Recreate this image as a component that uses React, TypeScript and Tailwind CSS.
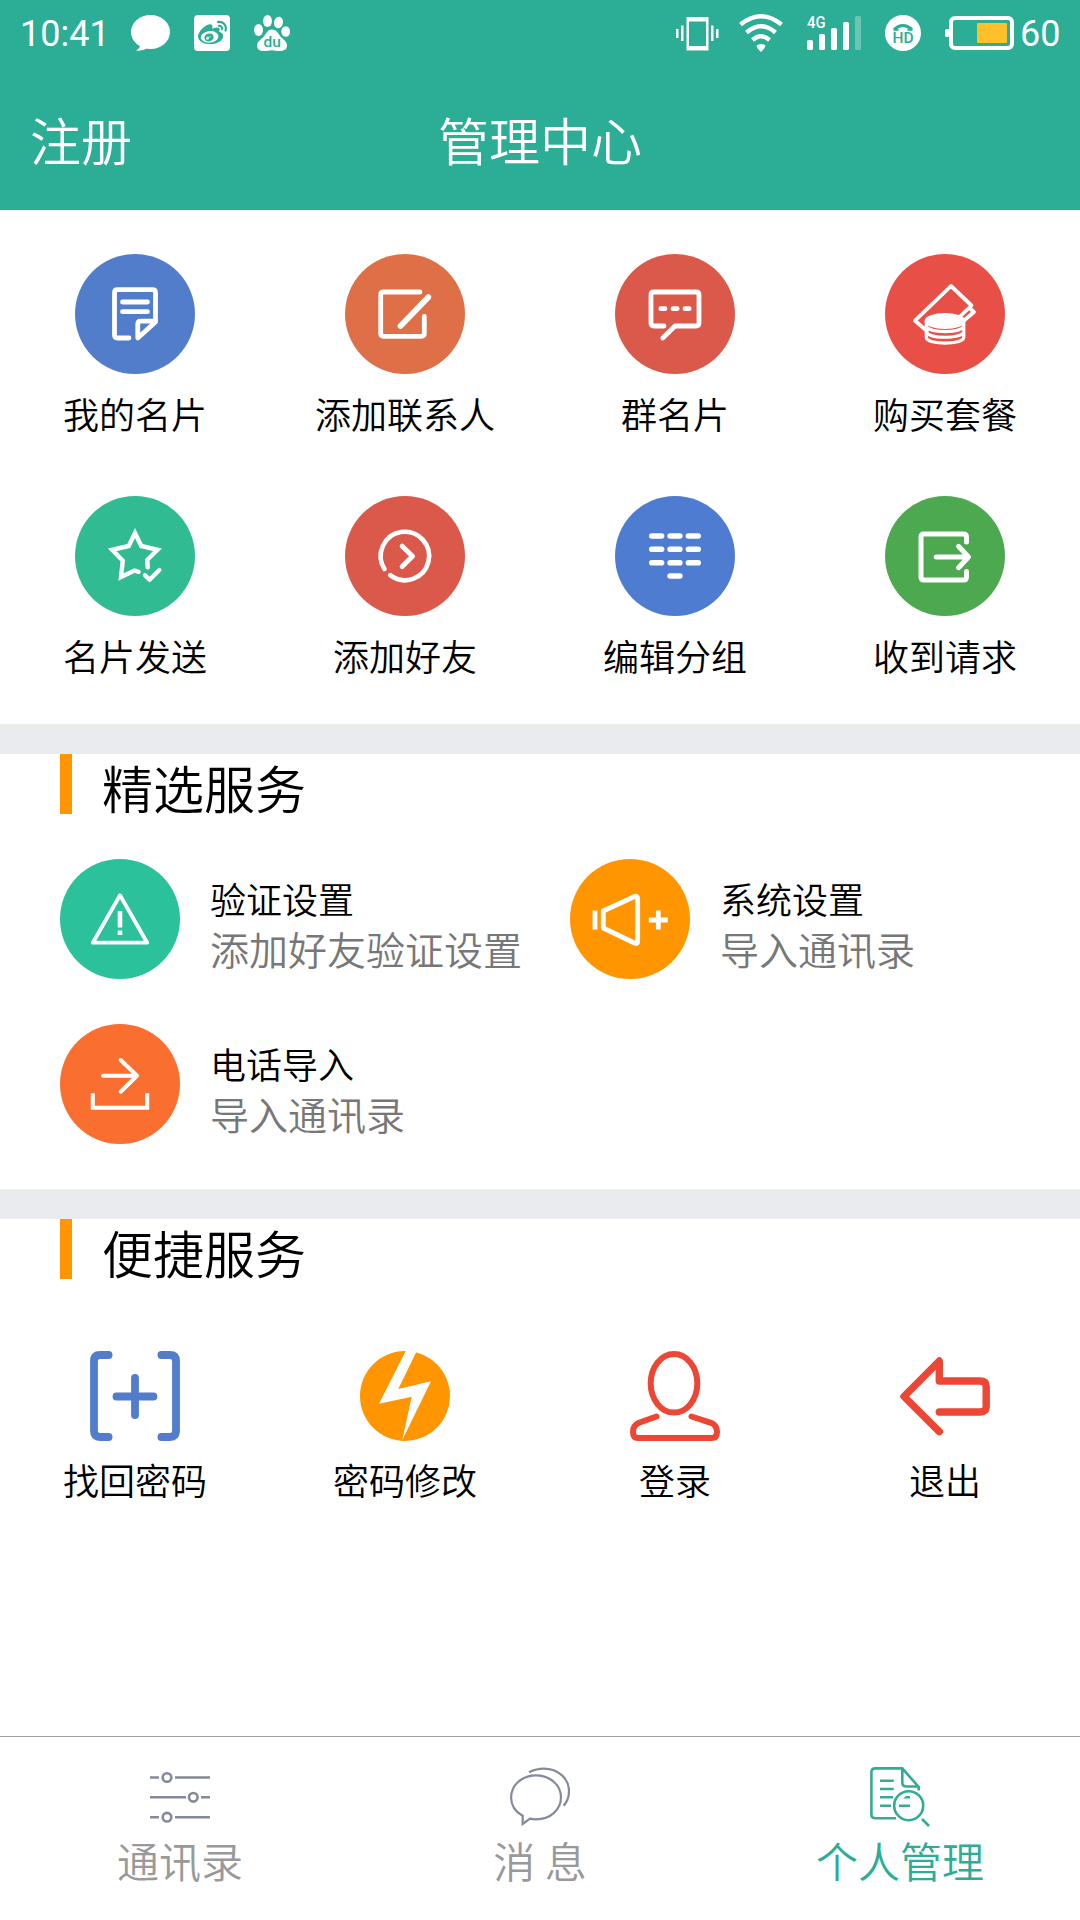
import type { ReactNode } from "react";
import { FaWeibo } from "react-icons/fa";

interface MenuItem {
  label: string;
  bg?: string;
  icon: ReactNode;
}

interface ServiceItem {
  title: string;
  desc: string;
  bg: string;
  icon: ReactNode;
}

const menuItems: MenuItem[] = [
  {
    label: "我的名片",
    bg: "bg-[#517dcb]",
    icon: (
      <g strokeWidth="4.8">
        <path d="M54 84H42.5Q39.5 84 39.5 81V38.7Q39.5 35.7 42.5 35.7H77.5Q80.5 35.7 80.5 38.7V68L62.8 84V70Q62.8 67.2 65.5 67.2H79" />
        <path d="M47.5 48H72.5M47.5 57.7H72.5" />
      </g>
    ),
  },
  {
    label: "添加联系人",
    bg: "bg-[#de6f46]",
    icon: (
      <>
        <path strokeWidth="4.8" d="M75 38H38.7Q35.7 38 35.7 41V79.3Q35.7 82.3 38.7 82.3H76.3Q79.3 82.3 79.3 79.3V62.5" />
        <path strokeWidth="5.8" d="M55.5 72L83.3 43.2" />
      </>
    ),
  },
  {
    label: "群名片",
    bg: "bg-[#da594a]",
    icon: (
      <>
        <path strokeWidth="4.8" d="M49 72H39Q36 72 36 69V41Q36 38 39 38H81Q84 38 84 41V69Q84 72 81 72H60L47.8 84" />
        <path strokeWidth="4.8" d="M45.8 54.7H50M58 54.7H62.2M70 54.7H74.2" />
      </>
    ),
  },
  {
    label: "购买套餐",
    bg: "bg-[#e84f46]",
    icon: (
      <g strokeWidth="3.8">
        <path d="M42 77L30 66.7L66 32L86.5 51.5L75 62.5M84.5 54L89 58L79 66.5" />
        <ellipse cx="60" cy="67" rx="18.5" ry="6" fill="#fff" />
        <path strokeWidth="3.2" d="M41.3 67V83.5C42 91 78 91 78.8 83.5V67M41.3 72C44 79.5 76 79.5 78.8 72M41.3 78C44 85 76 85 78.8 78" />
      </g>
    ),
  },
  {
    label: "名片发送",
    bg: "bg-[#31bb93]",
    icon: (
      <g strokeWidth="4.4">
        <path strokeLinejoin="miter" d="M72.7 71.3L72.3 63.8L82.5 53.8L66.3 50L60 37L53.7 50L37.2 53.8L47.8 64.8L46 81L59.5 74.5L63.6 75.8" />
        <path d="M70 79.3L74.6 83.8L84.3 74" />
      </g>
    ),
  },
  {
    label: "添加好友",
    bg: "bg-[#da594a]",
    icon: (
      <g strokeWidth="4.6">
        <path d="M39.5 73A24.2 24.2 0 1 1 45.2 79.2" />
        <path strokeWidth="5" d="M57.2 50.2L67.5 60.3L57.2 70.5" />
      </g>
    ),
  },
  {
    label: "编辑分组",
    bg: "bg-[#4e7cd1]",
    icon: (
      <path
        strokeWidth="5.6"
        d="M36.8 40H46.6M55.1 40H64.9M73.4 40H83.2M36.8 53.3H46.6M55.1 53.3H64.9M73.4 53.3H83.2M36.8 66.7H46.6M55.1 66.7H64.9M73.4 66.7H83.2M55.1 80H64.9"
      />
    ),
  },
  {
    label: "收到请求",
    bg: "bg-[#4da94f]",
    icon: (
      <g strokeWidth="5">
        <path d="M81.5 46V41Q81.5 38 78.5 38H39Q36 38 36 41V81Q36 84 39 84H78.5Q81.5 84 81.5 81V75.5" />
        <path d="M51.2 61H83M73.5 50.3L83.5 61L73.5 71.7" />
      </g>
    ),
  },
];

const serviceItems: ServiceItem[] = [
  {
    title: "验证设置",
    desc: "添加好友验证设置",
    bg: "bg-[#2bc29b]",
    icon: (
      <>
        <path strokeWidth="3.8" d="M60 36.3L87.2 83.7H32.8Z" />
        <path strokeWidth="4.6" strokeLinecap="butt" d="M60 52V68.5M60 71.5V76" />
      </>
    ),
  },
  {
    title: "系统设置",
    desc: "导入通讯录",
    bg: "bg-[#ff9500]",
    icon: (
      <g strokeWidth="4.8" strokeLinecap="butt">
        <path d="M25 51.5V70.5M88.3 51.5V70.5M78.8 61H97.8" />
        <path d="M33.3 52L64.5 37.5Q67.7 36.5 67.7 40V82Q67.7 85.5 64.5 84L33.3 69Z" />
      </g>
    ),
  },
  {
    title: "电话导入",
    desc: "导入通讯录",
    bg: "bg-[#fa6e2f]",
    icon: (
      <g strokeWidth="4">
        <path d="M43 51.7H77M60.7 36L77 51.7L60.7 67.7" />
        <path strokeLinecap="butt" strokeLinejoin="miter" d="M32.8 69.3V83.7H87.2V69.3" />
      </g>
    ),
  },
];

const quickItems: MenuItem[] = [
  {
    label: "找回密码",
    icon: (
      <g stroke="#517dcb" strokeWidth="7.8">
        <path d="M18.6 4H10Q4 4 4 10V80Q4 86 10 86H18.6M71.4 4H80Q86 4 86 10V80Q86 86 80 86H71.4" />
        <path d="M45 27V64M26.5 45.5H63.5" />
      </g>
    ),
  },
  {
    label: "密码修改",
    icon: (
      <>
        <circle cx="45" cy="45" r="45" fill="#ff9500" />
        <path fill="#fff" d="M45.7 0L19 52.7L51.7 45.7L42.3 89L71 30.3L38.3 38L56 1.5V0Z" />
      </>
    ),
  },
  {
    label: "登录",
    icon: (
      <g stroke="#ed4634" strokeWidth="6">
        <ellipse cx="44" cy="32.3" rx="23.3" ry="29.3" />
        <path d="M26.5 65.5L9 71.8Q3 74.5 3 81Q3 87 8 87H82Q87 87 87 81Q87 74.5 81 71.8L61.5 65.5" />
      </g>
    ),
  },
  {
    label: "退出",
    icon: (
      <path
        stroke="#ed4634"
        strokeWidth="7.4"
        d="M39.3 80.7L4 45.5L39.3 10V30H80Q86.2 30 86.2 35.5V55.5Q86.2 61 80 61H39.3"
      />
    ),
  },
];

const StatusBar = () => (
  <div className="flex h-[66px] items-center pl-5 font-['Roboto'] text-4xl font-normal text-white">
    <span className="w-[111px] pt-0.5">10:41</span>
    <svg width="39" height="36" viewBox="0 0 39 36" fill="#fff">
      <ellipse cx="19.5" cy="17" rx="19.5" ry="17" />
      <path d="M9 29Q10 33 5 35.5Q14 36.5 18 31Z" />
    </svg>
    <div className="ml-6 flex size-9 items-center justify-center rounded-sm bg-white">
      <FaWeibo className="size-[29px] text-[#2cad95]" />
    </div>
    <svg className="ml-6" width="36" height="36" viewBox="0 0 36 36" fill="#fff">
      <ellipse cx="4.5" cy="15" rx="4.5" ry="6" />
      <ellipse cx="13.5" cy="6" rx="4.5" ry="6" />
      <ellipse cx="24.5" cy="7.5" rx="4.5" ry="5.8" transform="rotate(12 24.5 7.5)" />
      <ellipse cx="31.7" cy="16.5" rx="4.4" ry="5.2" />
      <path d="M18 14.5C23 14.5 24 19 27.5 22.5C31 26 33.5 27.5 33 31.5C32.5 35 29 36 25.5 36C22 36 21 35.2 18 35.2C15 35.2 13 36 9.5 36C6 36 3 34.5 3 31C3 27 5.5 25.5 9 22.5C12 19.5 13 14.5 18 14.5Z" />
      <text x="18.3" y="31.5" textAnchor="middle" fontSize="15.5" fontWeight="500" fill="#2cad95">du</text>
    </svg>

    <svg className="ml-auto" width="43" height="36" viewBox="0 0 43 36" fill="#fff">
      <path fillRule="evenodd" d="M10.5 2H32.5V35.5H10.5ZM13 6.5V31H30V6.5Z" />
      <path d="M5 10.5H7.5V26H5ZM0 14H2.5V23H0ZM35 10.5H37.5V26H35ZM40 14H42.5V23H40Z" />
    </svg>
    <svg className="ml-5" width="44" height="38" viewBox="0 0 44 38" fill="none" stroke="#fff" strokeWidth="4.4">
      <path d="M1.5 10.5Q22 -6 42.5 10.5M7.5 18.5Q22 6 36.5 18.5M13.5 26Q22 18.5 30.5 26" />
      <path stroke="none" fill="#fff" d="M17.5 31.5Q22 28.5 26.5 31.5Q26 34.5 22 38Q18 34.5 17.5 31.5Z" />
    </svg>
    <svg className="ml-6 overflow-visible" width="54" height="42" viewBox="0 -3 54 42" fill="#fff">
      <text x="0" y="12.8" fontSize="16" fontWeight="500" textLength="18.5" lengthAdjust="spacingAndGlyphs">4G</text>
      <rect x="0" y="25" width="6" height="10" rx="1.5" />
      <rect x="12" y="19" width="6" height="16" rx="1.5" />
      <rect x="24" y="13" width="6" height="22" rx="1.5" />
      <rect x="36" y="7" width="6" height="28" rx="1.5" />
      <rect x="48" y="1" width="6" height="34" rx="1.5" opacity="0.3" />
    </svg>
    <svg className="ml-6" width="36" height="36" viewBox="0 0 36 36">
      <circle cx="18" cy="18" r="18" fill="#fff" />
      <path fill="none" stroke="#2cad95" strokeWidth="3" d="M9 14.5Q18 6.5 27 14.5" />
      <path stroke="#2cad95" strokeWidth="2" d="M8.5 14.7H13.5M22.5 14.7H27.5" />
      <text x="18" y="28.3" textAnchor="middle" fontSize="15.5" fontWeight="500" fill="#2cad95">HD</text>
    </svg>
    <svg className="ml-6" width="69" height="34" viewBox="0 0 69 34">
      <rect x="6" y="2" width="61" height="30" rx="4" fill="none" stroke="#fff" strokeWidth="4" />
      <rect x="0" y="13" width="5" height="8" rx="1.5" fill="#fff" />
      <rect x="32" y="7" width="30" height="20" rx="1" fill="#ffc02a" />
    </svg>
    <span className="w-[66px] pt-0.5 pl-[6px]">60</span>
  </div>
);

const CircleIcon = ({ bg, children }: { bg: string; children: ReactNode }) => (
  <div className={`size-[120px] shrink-0 rounded-full ${bg}`}>
    <svg
      viewBox="0 0 120 120"
      className="size-full"
      fill="none"
      stroke="#fff"
      strokeLinecap="round"
      strokeLinejoin="round"
    >
      {children}
    </svg>
  </div>
);

const SectionTitle = ({ title }: { title: string }) => (
  <div className="flex h-[60px] pl-[60px]">
    <div className="h-[60px] w-3 bg-[#ff9500]" />
    <h2 className="ml-[30px] text-[51px] leading-[66px]">{title}</h2>
  </div>
);

const navItems = [
  {
    label: "通讯录",
    color: "text-[#999999]",
    icon: (
      <g stroke="#858a9b" strokeWidth="2.6">
        <path d="M0 10.5H9M25 10.5H60M0 30.3H36M51 30.3H60M0 50.2H9M25 50.2H60" />
        <circle cx="17" cy="10.5" r="4.3" />
        <circle cx="43.3" cy="30.3" r="4.3" />
        <circle cx="17" cy="50.2" r="4.3" />
      </g>
    ),
  },
  {
    label: "消 息",
    color: "text-[#999999]",
    icon: (
      <g stroke="#858a9b" strokeWidth="2.2">
        <path d="M12.5 48.8C5 44.5 1.1 38 1.1 30.5C1.1 18 12 8.4 26 8.4C40 8.4 51 18 51 30.3C51 43 40 52.3 26 52.3Q23 52.3 20 51.6L12.7 57V48.8Z" />
        <path d="M19 5.3C24 2.8 29 1.7 34 1.7C48 1.7 59 11.5 59 24C59 30 57 35 53.5 38.7" />
      </g>
    ),
  },
  {
    label: "个人管理",
    color: "text-[#2cad95]",
    icon: (
      <g stroke="#35ab93" strokeWidth="2.6">
        <path d="M26 51.3H5.5Q1.4 51.3 1.4 47.5V5.5Q1.4 1.4 5.5 1.4H32.3L48.7 20V23.5M32.3 1.4V15.5Q32.3 19.5 36.5 19.5H48.5" />
        <path d="M10 13.7H23.7M10 22H23.7M10 30.3H23M10 38.7H21M29 38.7H40" />
        <path fill="#35ab93" stroke="none" d="M33 31.6L36 29H40V31.6Z" />
        <circle cx="38.7" cy="38.7" r="14.5" />
        <path d="M52 52L59 59" />
      </g>
    ),
  },
];

const App = () => {
  return (
    <div className="flex h-[1920px] w-[1080px] flex-col bg-white font-['Noto_Sans_CJK_SC',sans-serif] font-[350] text-black">
      <header className="h-[210px] bg-[#2cad95] text-white">
        <StatusBar />
        <div className="grid h-[144px] grid-cols-3 items-center px-[30px] pt-0.5 text-[51px]">
          <span>注册</span>
          <h1 className="text-center">管理中心</h1>
        </div>
      </header>

      <div className="grid grid-cols-4 gap-y-[62px] pt-11 pb-12">
        {menuItems.map((item) => (
          <div key={item.label} className="flex flex-col items-center">
            <CircleIcon bg={item.bg!}>{item.icon}</CircleIcon>
            <span className="mt-[18px] text-4xl leading-[42px]">{item.label}</span>
          </div>
        ))}
      </div>

      <section className="border-t-[30px] border-[#eaebef]">
        <SectionTitle title="精选服务" />
        <div className="grid grid-cols-[510px_510px] gap-y-[45px] pt-[45px] pb-[45px] pl-[60px]">
          {serviceItems.map((item) => (
            <div key={item.title} className="flex">
              <CircleIcon bg={item.bg}>{item.icon}</CircleIcon>
              <div className="ml-[30px] pt-[14px]">
                <p className="text-4xl leading-[50px]">{item.title}</p>
                <p className="text-[39px] leading-[51px] text-[#777777]">{item.desc}</p>
              </div>
            </div>
          ))}
        </div>
      </section>

      <section className="border-t-[30px] border-[#eaebef]">
        <SectionTitle title="便捷服务" />
        <div className="grid grid-cols-4 pt-[72px]">
          {quickItems.map((item) => (
            <div key={item.label} className="flex flex-col items-center">
              <svg
                viewBox="0 0 90 90"
                className="size-[90px]"
                fill="none"
                strokeLinecap="round"
                strokeLinejoin="round"
              >
                {item.icon}
              </svg>
              <span className="mt-[17px] text-4xl leading-[42px]">{item.label}</span>
            </div>
          ))}
        </div>
      </section>

      <nav className="mt-auto grid h-[184px] grid-cols-3 border-t border-[#a0a0a0] pt-[30px]">
        {navItems.map((item) => (
          <div key={item.label} className="flex flex-col items-center">
            <svg viewBox="0 0 60 60" className="size-[60px]" fill="none">
              {item.icon}
            </svg>
            <span className={`mt-2 text-[42px] leading-[50px] ${item.color}`}>{item.label}</span>
          </div>
        ))}
      </nav>
    </div>
  );
};

export default App;
